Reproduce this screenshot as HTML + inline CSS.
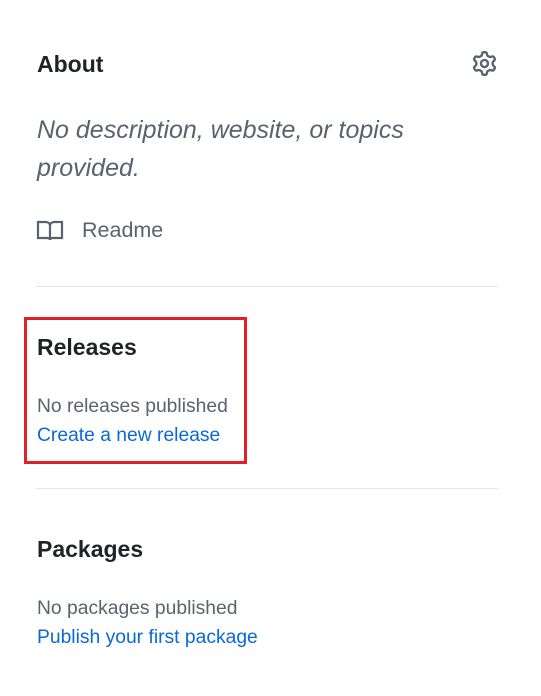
<!DOCTYPE html>
<html><head><style>
body{margin:0;width:541px;height:696px;background:#fff;font-family:"Liberation Sans",sans-serif;position:relative;overflow:hidden}
.a{position:absolute;white-space:nowrap;line-height:1}
h2{margin:0;font-size:23px;font-weight:bold;color:#1f2328}
.m{font-size:19.3px;color:#59636e}
.l{font-size:19.3px;color:#0969da}
.hr{position:absolute;left:36px;width:462px;height:1px;background:#e5e8eb}
</style></head><body>
<h2 class="a" style="left:37px;top:53px">About</h2>
<svg class="a" style="left:472px;top:51px" width="25" height="25" viewBox="0 0 16 16"><path fill="#59636e" d="M8 0a8.2 8.2 0 0 1 .701.031C9.444.095 9.99.645 10.160 1.29l.288 1.107c.018.066.079.158.212.224.231.114.454.243.668.386.123.082.233.09.299.071l1.103-.303c.644-.176 1.392.021 1.820.63.27.385.506.792.704 1.218.315.675.111 1.422-.364 1.891l-.814.806c-.049.048-.098.147-.088.294.016.257.016.515 0 .772-.01.147.038.246.088.294l.814.806c.475.469.679 1.216.364 1.891a7.977 7.977 0 0 1-.704 1.217c-.428.61-1.176.807-1.820.63l-1.102-.302c-.067-.019-.177-.011-.3.071a5.909 5.909 0 0 1-.668.386c-.133.066-.194.158-.211.224l-.29 1.106c-.168.646-.715 1.196-1.458 1.260a8.006 8.006 0 0 1-1.402 0c-.743-.064-1.289-.614-1.458-1.260l-.289-1.106c-.018-.066-.079-.158-.212-.224a5.738 5.738 0 0 1-.668-.386c-.123-.082-.233-.09-.299-.071l-1.103.303c-.644.176-1.392-.021-1.820-.63a8.12 8.12 0 0 1-.704-1.218c-.315-.675-.111-1.422.363-1.891l.815-.806c.05-.048.098-.147.088-.294a6.214 6.214 0 0 1 0-.772c.01-.147-.038-.246-.088-.294l-.815-.806C.635 6.045.431 5.298.746 4.623a7.92 7.92 0 0 1 .704-1.217c.428-.61 1.176-.807 1.820-.63l1.102.302c.067.019.177.011.3-.071.214-.143.437-.272.668-.386.133-.066.194-.158.211-.224l.29-1.106C6.009.645 6.556.095 7.299.03 7.53.01 7.764 0 8 0Zm-.571 1.525c-.036.003-.108.036-.137.146l-.289 1.105c-.147.561-.549.967-.998 1.189-.173.086-.34.183-.5.29-.417.278-.97.423-1.529.27l-1.103-.303c-.109-.03-.175.016-.195.045-.22.312-.412.644-.573.99-.014.031-.021.11.059.19l.815.806c.411.406.562.957.53 1.456a4.709 4.709 0 0 0 0 .582c.032.499-.119 1.050-.53 1.456l-.815.806c-.081.08-.073.159-.059.19.162.346.353.677.573.989.02.03.085.076.195.046l1.102-.303c.56-.153 1.113-.008 1.530.27.161.107.328.204.501.29.447.222.85.629.997 1.189l.289 1.105c.029.109.101.143.137.146a6.6 6.6 0 0 0 1.142 0c.036-.003.108-.036.137-.146l.289-1.105c.147-.561.549-.967.998-1.189.173-.086.34-.183.5-.29.417-.278.97-.423 1.529-.27l1.103.303c.109.029.175-.016.195-.045.22-.313.411-.644.573-.99.014-.031.021-.11-.059-.19l-.815-.806c-.411-.406-.562-.957-.53-1.456a4.709 4.709 0 0 0 0-.582c-.032-.499.119-1.050.53-1.456l.815-.806c.081-.08.073-.159.059-.19a6.464 6.464 0 0 0-.573-.989c-.02-.03-.085-.076-.195-.046l-1.102.303c-.56.153-1.113.008-1.530-.27a4.44 4.44 0 0 0-.501-.29c-.447-.222-.85-.629-.997-1.189l-.289-1.105c-.029-.11-.101-.143-.137-.146a6.6 6.6 0 0 0-1.142 0ZM11 8a3 3 0 1 1-6 0 3 3 0 0 1 6 0ZM9.5 8a1.5 1.5 0 1 0-3.001.001A1.5 1.5 0 0 0 9.5 8Z"/></svg>
<div class="a" style="left:37px;top:111px;font-size:25px;font-style:italic;color:#59636e;line-height:38px;white-space:normal;width:440px">No description, website, or topics provided.</div>
<svg class="a" style="left:36px;top:219px" width="28" height="24" viewBox="0 0 28 24"><path fill="none" stroke="#59636e" stroke-width="2.2" d="M2 3h8c2 0 4 1.5 4 3.5V21c0-1.3-1.3-2-3-2H2V3zM26 3h-8c-2 0-4 1.5-4 3.5V21c0-1.3 1.3-2 3-2h9V3z"/></svg>
<div class="a m" style="left:82px;top:220px;font-size:21.5px">Readme</div>
<div class="hr" style="top:286px"></div>
<div class="a" style="left:24px;top:317px;width:217px;height:141px;border:3px solid #e41e2b"></div>
<h2 class="a" style="left:37px;top:336px">Releases</h2>
<div class="a m" style="left:37px;top:397px">No releases published</div>
<div class="a l" style="left:37px;top:426px">Create a new release</div>
<div class="hr" style="top:488px"></div>
<h2 class="a" style="left:37px;top:538px">Packages</h2>
<div class="a m" style="left:37px;top:599px">No packages published</div>
<div class="a l" style="left:37px;top:628px">Publish your first package</div>
</body></html>
